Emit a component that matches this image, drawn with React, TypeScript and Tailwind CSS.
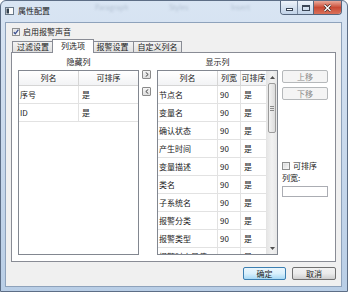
import React from "react";

const rightRows = [
  "节点名",
  "变量名",
  "确认状态",
  "产生时间",
  "变量描述",
  "类名",
  "子系统名",
  "报警分类",
  "报警类型",
  "报警时变量值",
];

function CheckBox({ checked }: { checked?: boolean }) {
  return (
    <svg width="8" height="8" viewBox="0 0 8 8" className="shrink-0">
      <defs>
        <linearGradient id={checked ? "cbg1" : "cbg2"} x1="0" y1="0" x2="1" y2="1">
          <stop offset="0" stopColor="#d9dadb" />
          <stop offset="1" stopColor="#f7f7f7" />
        </linearGradient>
      </defs>
      <rect x="0.5" y="0.5" width="7" height="7" fill="#f4f4f4" stroke="#8e8f8f" />
      <rect x="1.5" y="1.5" width="5" height="5" fill={`url(#${checked ? "cbg1" : "cbg2"})`} />
      {checked && (
        <path d="M1.8 4.2 L3.3 5.8 L6.4 1.6" fill="none" stroke="#3a4f8f" strokeWidth="1.3" />
      )}
    </svg>
  );
}

function HiddenTable() {
  return (
    <div className="w-[121px] h-[185px] border border-[#828790] bg-white flex flex-col overflow-hidden">
      <div className="flex h-[15px] shrink-0 border-b border-[#d5d5d5] bg-gradient-to-b from-white to-[#f2f3f5]">
        <div className="w-[60px] border-r border-[#d5d5d5] flex items-center justify-center leading-none">列名</div>
        <div className="flex-1 flex items-center justify-center leading-none">可排序</div>
      </div>
      {[
        ["序号", "是"],
        ["ID", "是"],
      ].map(([a, b]) => (
        <div key={a} className="flex h-[18px] shrink-0 border-b border-[#e2e2e2]">
          <div className="w-[60px] border-r border-[#e2e2e2] flex items-center pl-[1px] leading-none">{a}</div>
          <div className="flex-1 flex items-center pl-[3px] leading-none">{b}</div>
        </div>
      ))}
    </div>
  );
}

function ScrollBar() {
  return (
    <div className="w-[11px] h-full shrink-0 flex flex-col bg-gradient-to-r from-[#e6e6e6] via-[#f2f2f2] to-[#e6e6e6] border-l border-[#e4e4e4]">
      <div className="h-[12px] flex items-center justify-center shrink-0">
        <svg width="5" height="3" viewBox="0 0 5 3">
          <path d="M0 3 L2.5 0 L5 3 Z" fill="#505050" />
        </svg>
      </div>
      <div className="h-[50px] mx-[1px] shrink-0 rounded-[2px] border border-[#9b9b9b] bg-gradient-to-r from-[#f3f3f3] to-[#dcdcdc] flex flex-col items-center justify-center gap-[1px]">
        <div className="w-[4px] h-px bg-[#8a8a8a]" />
        <div className="w-[4px] h-px bg-[#8a8a8a]" />
        <div className="w-[4px] h-px bg-[#8a8a8a]" />
      </div>
      <div className="flex-1" />
      <div className="h-[12px] flex items-center justify-center shrink-0">
        <svg width="5" height="3" viewBox="0 0 5 3">
          <path d="M0 0 L2.5 3 L5 0 Z" fill="#505050" />
        </svg>
      </div>
    </div>
  );
}

function ShownTable() {
  return (
    <div className="w-[121px] h-[185px] border border-[#828790] bg-white flex overflow-hidden">
      <div className="flex-1 flex flex-col overflow-hidden">
        <div className="flex h-[15px] shrink-0 border-b border-[#d5d5d5] bg-gradient-to-b from-white to-[#f2f3f5]">
          <div className="w-[60px] border-r border-[#d5d5d5] flex items-center justify-center leading-none">列名</div>
          <div className="w-[23px] border-r border-[#d5d5d5] flex items-center justify-center leading-none">列宽</div>
          <div className="flex-1 flex items-center justify-center leading-none whitespace-nowrap">可排序</div>
        </div>
        {rightRows.map((r) => (
          <div key={r} className="flex h-[18px] shrink-0 border-b border-[#e2e2e2]">
            <div className="w-[60px] border-r border-[#e2e2e2] flex items-center pl-[1px] leading-none whitespace-nowrap overflow-hidden">{r}</div>
            <div className="w-[23px] border-r border-[#e2e2e2] flex items-center pl-[2px] leading-none">90</div>
            <div className="flex-1 flex items-center pl-[3px] leading-none">是</div>
          </div>
        ))}
      </div>
      <ScrollBar />
    </div>
  );
}

function ArrowBtn({ dir }: { dir: "r" | "l" }) {
  return (
    <div className="w-[9px] h-[9px] rounded-[1px] border border-[#8a8a8a] bg-gradient-to-b from-[#f6f6f6] to-[#dedede] flex items-center justify-center">
      <svg width="4" height="5" viewBox="0 0 4 5">
        <path
          d={dir === "r" ? "M0.7 0.4 L3.2 2.5 L0.7 4.6" : "M3.3 0.4 L0.8 2.5 L3.3 4.6"}
          fill="none"
          stroke="#333"
          strokeWidth="0.9"
        />
      </svg>
    </div>
  );
}

function DisabledBtn({ label }: { label: string }) {
  return (
    <div className="w-[46px] h-[13px] rounded-[2px] border border-[#b5b8ba] bg-[#f4f4f4] text-[#8a8a8a] flex items-center justify-center leading-none">
      {label}
    </div>
  );
}

export default function App() {
  return (
    <div className="w-[348px] h-[292px] font-['Noto_Sans_CJK_SC','Noto_Sans',sans-serif] text-[8px] text-[#1a1a1a]">
      <div className="relative w-full h-full flex flex-col rounded-t-[6px] border border-[#5d6e86] bg-gradient-to-b from-[#d9e5f3] via-[#c9d9ec] to-[#b9cee6] overflow-hidden">
        {/* blurred content behind the glass */}
        <div className="absolute left-[94px] top-[1px] text-[7px] text-[#b3c1d2] blur-[1px]">Paragraph</div>
        <div className="absolute left-[168px] top-[1px] text-[7px] text-[#b3c1d2] blur-[1px]">Styles</div>
        <div className="absolute left-[230px] top-[1px] text-[7px] text-[#b3c1d2] blur-[1px]">Insert</div>

        {/* title bar */}
        <div className="relative h-[21px] shrink-0 flex items-start">
          <div className="flex items-center h-[19px] pl-[4px]">
            <svg width="9" height="8" viewBox="0 0 9 8">
              <rect x="0.5" y="0.5" width="8" height="7" fill="#fafafa" stroke="#687888" />
              <rect x="1.5" y="1.5" width="2.5" height="5" fill="#33414f" />
            </svg>
            <span className="ml-[4px] leading-none">属性配置</span>
          </div>
          <div className="flex-1" />
          <div className="mr-[5px] flex h-[14px] rounded-b-[4px] border-x border-b border-[#56667d] overflow-hidden">
            <div className="w-[17px] h-full border-r border-[#7a8aa0] bg-gradient-to-b from-[#eef3fa] via-[#d5e1ef] to-[#c2d3e8] flex items-center justify-center">
              <div className="w-[7px] h-[3px] mt-[3px] bg-white border border-[#3b4656]" />
            </div>
            <div className="w-[16px] h-full border-r border-[#56667d] bg-gradient-to-b from-[#eef3fa] via-[#d5e1ef] to-[#c2d3e8] flex items-center justify-center">
              <div className="w-[8px] h-[6px] border border-[#3b4656] border-t-2 bg-transparent" />
            </div>
            <div className="w-[27px] h-full bg-gradient-to-b from-[#e9a99b] via-[#c94a35] to-[#d9705a] flex items-center justify-center">
              <svg width="9" height="8" viewBox="0 0 9 8">
                <path d="M1.5 1 L7.5 7 M7.5 1 L1.5 7" stroke="#3a2420" strokeWidth="2.6" />
                <path d="M1.5 1 L7.5 7 M7.5 1 L1.5 7" stroke="#ffffff" strokeWidth="1.4" />
              </svg>
            </div>
          </div>
        </div>

        {/* client area */}
        <div className="flex-1 ml-[4px] mr-[5px] mb-[4px] border border-[#8ea2bb] bg-[#f0f0f0] flex flex-col px-[5px] pt-[4px] pb-[6px]">
          <div className="h-[10px] flex items-center pl-[1px]">
            <CheckBox checked />
            <span className="ml-[3px] leading-none">启用报警声音</span>
          </div>

          {/* tabs */}
          <div className="mt-[2px] h-[13px] flex items-end pl-[1px]">
            <div className="w-[42px] h-[11px] border-l border-t border-r border-[#898c95] bg-gradient-to-b from-[#f4f4f4] to-[#e1e1e1] flex items-center justify-center leading-none">
              过滤设置
            </div>
            <div className="relative z-10 -mx-[2px] -mb-px w-[42px] h-[14px] border-l border-t border-r border-[#898c95] bg-white flex items-center justify-center leading-none pb-[1px]">
              列选项
            </div>
            <div className="w-[42px] h-[11px] border-t border-r border-[#898c95] bg-gradient-to-b from-[#f4f4f4] to-[#e1e1e1] flex items-center justify-center leading-none">
              报警设置
            </div>
            <div className="w-[48px] h-[11px] border-t border-r border-[#898c95] bg-gradient-to-b from-[#f4f4f4] to-[#e1e1e1] flex items-center justify-center leading-none">
              自定义列名
            </div>
          </div>

          {/* pane */}
          <div className="h-[210px] shrink-0 border border-[#898c95] bg-white flex px-[6px] pb-[6px]">
            <div className="w-[121px] flex flex-col">
              <div className="h-[17px] flex items-center justify-center leading-none">隐藏列</div>
              <HiddenTable />
            </div>
            <div className="ml-[3px] w-[9px] pt-[17px] flex flex-col">
              <ArrowBtn dir="r" />
              <div className="mt-[8px]">
                <ArrowBtn dir="l" />
              </div>
            </div>
            <div className="ml-[6px] w-[121px] flex flex-col">
              <div className="h-[17px] flex items-center justify-center leading-none">显示列</div>
              <ShownTable />
            </div>
            <div className="ml-[4px] w-[46px] pt-[17px] flex flex-col">
              <DisabledBtn label="上移" />
              <div className="mt-[4px]">
                <DisabledBtn label="下移" />
              </div>
              <div className="mt-[62px] h-[8px] flex items-center">
                <CheckBox />
                <span className="ml-[3px] leading-none">可排序</span>
              </div>
              <div className="mt-[3px] h-[9px] flex items-center leading-none">列宽:</div>
              <div className="mt-[4px] h-[11px] w-[46px] border border-[#abadb3] bg-white" />
            </div>
          </div>

          {/* bottom buttons */}
          <div className="mt-[5px] h-[13px] flex justify-end gap-[6px]">
            <div className="w-[43px] h-[13px] rounded-[2px] border border-[#3c7fb1] bg-gradient-to-b from-[#eaf6fd] via-[#d9f0fc] to-[#a7d9f5] flex items-center justify-center leading-none">
              确定
            </div>
            <div className="w-[44px] h-[13px] rounded-[2px] border border-[#707070] bg-gradient-to-b from-[#f2f2f2] via-[#ebebeb] to-[#cfcfcf] flex items-center justify-center leading-none">
              取消
            </div>
          </div>
        </div>
      </div>
    </div>
  );
}
